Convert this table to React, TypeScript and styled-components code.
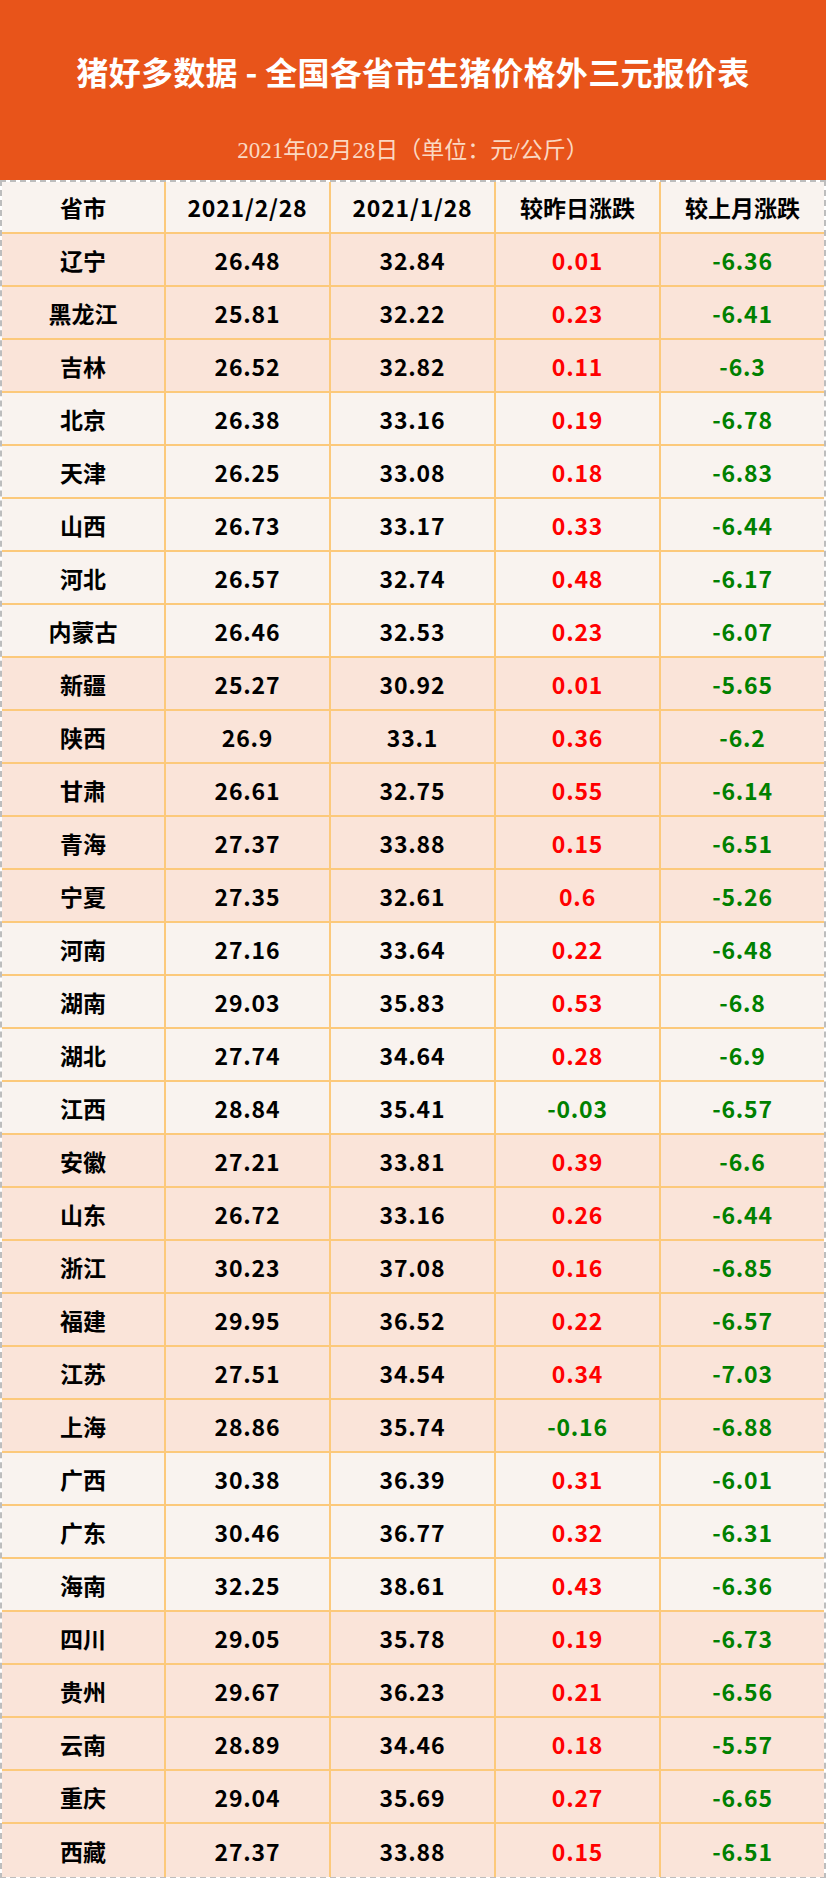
import styled, { createGlobalStyle } from "styled-components"

type Row = [string, string, string, string, string, boolean]

// name, 2/28, 1/28, day change, month change, peach row?
const rows: Row[] = [
 ["辽宁", "26.48", "32.84", "0.01", "-6.36", true],
 ["黑龙江", "25.81", "32.22", "0.23", "-6.41", true],
 ["吉林", "26.52", "32.82", "0.11", "-6.3", true],
 ["北京", "26.38", "33.16", "0.19", "-6.78", false],
 ["天津", "26.25", "33.08", "0.18", "-6.83", false],
 ["山西", "26.73", "33.17", "0.33", "-6.44", false],
 ["河北", "26.57", "32.74", "0.48", "-6.17", false],
 ["内蒙古", "26.46", "32.53", "0.23", "-6.07", false],
 ["新疆", "25.27", "30.92", "0.01", "-5.65", true],
 ["陕西", "26.9", "33.1", "0.36", "-6.2", true],
 ["甘肃", "26.61", "32.75", "0.55", "-6.14", true],
 ["青海", "27.37", "33.88", "0.15", "-6.51", true],
 ["宁夏", "27.35", "32.61", "0.6", "-5.26", true],
 ["河南", "27.16", "33.64", "0.22", "-6.48", false],
 ["湖南", "29.03", "35.83", "0.53", "-6.8", false],
 ["湖北", "27.74", "34.64", "0.28", "-6.9", false],
 ["江西", "28.84", "35.41", "-0.03", "-6.57", false],
 ["安徽", "27.21", "33.81", "0.39", "-6.6", true],
 ["山东", "26.72", "33.16", "0.26", "-6.44", true],
 ["浙江", "30.23", "37.08", "0.16", "-6.85", true],
 ["福建", "29.95", "36.52", "0.22", "-6.57", true],
 ["江苏", "27.51", "34.54", "0.34", "-7.03", true],
 ["上海", "28.86", "35.74", "-0.16", "-6.88", true],
 ["广西", "30.38", "36.39", "0.31", "-6.01", false],
 ["广东", "30.46", "36.77", "0.32", "-6.31", false],
 ["海南", "32.25", "38.61", "0.43", "-6.36", false],
 ["四川", "29.05", "35.78", "0.19", "-6.73", true],
 ["贵州", "29.67", "36.23", "0.21", "-6.56", true],
 ["云南", "28.89", "34.46", "0.18", "-5.57", true],
 ["重庆", "29.04", "35.69", "0.27", "-6.65", true],
 ["西藏", "27.37", "33.88", "0.15", "-6.51", true]
]

const heads = ["省市", "2021/2/28", "2021/1/28", "较昨日涨跌", "较上月涨跌"]

const tone = (v: string) => (v.startsWith("-") ? "down" : "up")

const App = () => (
 <>
  <Global />
  <Page>
   <Banner>
    <Title>猪好多数据 - 全国各省市生猪价格外三元报价表</Title>
    <Sub>2021年02月28日（单位：元/公斤）</Sub>
   </Banner>
   <Table>
    <HeadRow>
     {heads.map((h, i) => (
      <Cell key={h} $num={i === 1 || i === 2}>{h}</Cell>
     ))}
    </HeadRow>
    {rows.map(r => (
     <DataRow key={r[0]} $peach={r[5]}>
      <Cell>{r[0]}</Cell>
      <Cell $num>{r[1]}</Cell>
      <Cell $num>{r[2]}</Cell>
      <Cell $num $tone={tone(r[3])}>{r[3]}</Cell>
      <Cell $num $tone={tone(r[4])}>{r[4]}</Cell>
     </DataRow>
    ))}
   </Table>
  </Page>
 </>
)

export default App

const Global = createGlobalStyle`
 html, body {
  margin: 0;
  padding: 0;
  background: #ffffff;
 }
 * {
  box-sizing: border-box;
 }
`

const Page = styled.div`
 width: 826px;
 font-family: "Noto Sans CJK SC", "Noto Sans", sans-serif;
`

const Banner = styled.header`
 height: 180px;
 background: #e8541a;
 display: flex;
 flex-direction: column;
 align-items: center;
 padding-top: 46px;
`

const Title = styled.h1`
 margin: 0;
 color: #ffffff;
 font-size: 32px;
 font-weight: 700;
 line-height: 50px;
 letter-spacing: 0.3px;
`

const Sub = styled.p`
 margin: 42px 0 0;
 color: #fbd8c2;
 font-family: "Liberation Serif", "Noto Sans CJK SC", serif;
 font-size: 23px;
 line-height: 26px;
`

const Table = styled.div`
 border: 2px dashed #bdbdbd;
`

const Line = styled.div`
 display: grid;
 grid-template-columns: 164px 165px 165px 165px 1fr;
 border-bottom: 2px solid #fcc97b;

 &:last-child {
  border-bottom: none;
 }
`

const HeadRow = styled(Line)`
 height: 52px;
 background: #f9f3ef;
`

const DataRow = styled(Line)<{ $peach: boolean }>`
 height: 53px;
 background: ${p => (p.$peach ? "#fae4d9" : "#f9f3ef")};
`

const Cell = styled.div<{ $tone?: "up" | "down"; $num?: boolean }>`
 display: flex;
 align-items: center;
 justify-content: center;
 font-size: 23px;
 font-weight: 700;
 letter-spacing: ${p => (p.$num ? "0.8px" : "0")};
 color: ${p => (p.$tone === "up" ? "#ff0000" : p.$tone === "down" ? "#008000" : "#000000")};
 border-right: 2px solid #fcc97b;

 &:last-child {
  border-right: none;
 }
`
